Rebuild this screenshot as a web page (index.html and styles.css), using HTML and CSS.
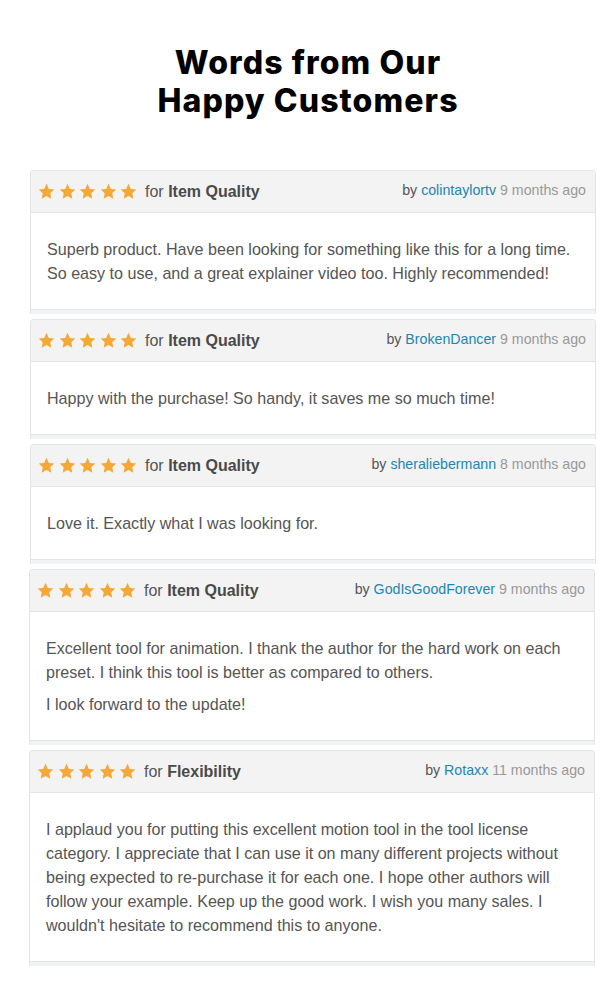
FILE: index.html
```html
<!DOCTYPE html>
<html lang="en">
<head>
<meta charset="utf-8">
<title>Words from Our Happy Customers</title>
<link rel="stylesheet" href="styles.css">
</head>
<body>
<svg width="0" height="0" class="defs" aria-hidden="true">
  <defs>
    <symbol id="star" viewBox="0 0 24 24">
      <path d="M12 1.2l3.3 7.1 7.7.9-5.7 5.3 1.5 7.7L12 18.3l-6.8 3.9 1.5-7.7L1 9.2l7.7-.9z"/>
    </symbol>
  </defs>
</svg>
<main class="page">
  <h1 class="title">Words from Our<br>Happy Customers</h1>

  <section class="reviews">
    <article class="review">
      <header class="review-head">
        <div class="rating">
          <span class="stars"><svg><use href="#star"/></svg><svg><use href="#star"/></svg><svg><use href="#star"/></svg><svg><use href="#star"/></svg><svg><use href="#star"/></svg></span>
          <span class="for">for <b>Item Quality</b></span>
        </div>
        <div class="meta">by <a href="#">colintaylortv</a> <span class="ago">9 months ago</span></div>
      </header>
      <div class="review-body">
        <p>Superb product. Have been looking for something like this for a long time. So easy to use, and a great explainer video too. Highly recommended!</p>
      </div>
      <div class="review-foot"></div>
    </article>

    <article class="review">
      <header class="review-head">
        <div class="rating">
          <span class="stars"><svg><use href="#star"/></svg><svg><use href="#star"/></svg><svg><use href="#star"/></svg><svg><use href="#star"/></svg><svg><use href="#star"/></svg></span>
          <span class="for">for <b>Item Quality</b></span>
        </div>
        <div class="meta">by <a href="#">BrokenDancer</a> <span class="ago">9 months ago</span></div>
      </header>
      <div class="review-body">
        <p>Happy with the purchase! So handy, it saves me so much time!</p>
      </div>
      <div class="review-foot"></div>
    </article>

    <article class="review">
      <header class="review-head">
        <div class="rating">
          <span class="stars"><svg><use href="#star"/></svg><svg><use href="#star"/></svg><svg><use href="#star"/></svg><svg><use href="#star"/></svg><svg><use href="#star"/></svg></span>
          <span class="for">for <b>Item Quality</b></span>
        </div>
        <div class="meta">by <a href="#">sheraliebermann</a> <span class="ago">8 months ago</span></div>
      </header>
      <div class="review-body">
        <p>Love it. Exactly what I was looking for.</p>
      </div>
      <div class="review-foot"></div>
    </article>

    <article class="review review--shift">
      <header class="review-head">
        <div class="rating">
          <span class="stars"><svg><use href="#star"/></svg><svg><use href="#star"/></svg><svg><use href="#star"/></svg><svg><use href="#star"/></svg><svg><use href="#star"/></svg></span>
          <span class="for">for <b>Item Quality</b></span>
        </div>
        <div class="meta">by <a href="#">GodIsGoodForever</a> <span class="ago">9 months ago</span></div>
      </header>
      <div class="review-body">
        <p>Excellent tool for animation. I thank the author for the hard work on each preset. I think this tool is better as compared to others.</p>
        <p>I look forward to the update!</p>
      </div>
      <div class="review-foot"></div>
    </article>

    <article class="review review--shift">
      <header class="review-head">
        <div class="rating">
          <span class="stars"><svg><use href="#star"/></svg><svg><use href="#star"/></svg><svg><use href="#star"/></svg><svg><use href="#star"/></svg><svg><use href="#star"/></svg></span>
          <span class="for">for <b>Flexibility</b></span>
        </div>
        <div class="meta">by <a href="#">Rotaxx</a> <span class="ago">11 months ago</span></div>
      </header>
      <div class="review-body">
        <p>I applaud you for putting this excellent motion tool in the tool license category. I appreciate that I can use it on many different projects without being expected to re-purchase it for each one. I hope other authors will follow your example. Keep up the good work. I wish you many sales. I wouldn't hesitate to recommend this to anyone.</p>
      </div>
      <div class="review-foot"></div>
    </article>
  </section>
</main>
</body>
</html>
```

FILE: styles.css
```css
* { box-sizing: border-box; }

html, body {
  margin: 0;
  padding: 0;
  background: #ffffff;
}

.defs { position: absolute; width: 0; height: 0; overflow: hidden; }

.page {
  font-family: "Liberation Sans", Arial, sans-serif;
  color: #555555;
  padding-top: 44px;
  padding-bottom: 20px;
}

.title {
  margin: 0 0 50px;
  text-align: center;
  font-family: Inter, "DejaVu Sans", sans-serif;
  font-weight: 800;
  font-size: 32px;
  line-height: 38px;
  color: #000000;
  letter-spacing: 1.1px;
}

.reviews {
  display: flex;
  flex-direction: column;
  gap: 5px;
}

.review {
  width: 566px;
  margin-left: 30px;
  border: 1px solid #e1e5e8;
  border-bottom: none;
  border-radius: 4px 4px 0 0;
  background: #ffffff;
}

.review--shift {
  margin-left: 29px;
}

.review-head {
  display: flex;
  align-items: center;
  justify-content: space-between;
  height: 42px;
  padding: 0 9px 0 7px;
  background: #f3f3f3;
  border-bottom: 1px solid #e1e5e8;
  border-radius: 4px 4px 0 0;
}

.rating {
  display: flex;
  align-items: center;
}

.stars {
  display: flex;
  gap: 3.5px;
  margin-right: 8px;
}

.stars svg {
  width: 17px;
  height: 17px;
  fill: #f4a836;
}

.for {
  font-size: 16px;
  color: #555555;
}

.for b {
  font-weight: 700;
  color: #4a4a4a;
}

.meta {
  font-size: 14.2px;
  color: #555555;
  margin-bottom: 3px;
}

.meta a {
  color: #1d86b3;
  text-decoration: none;
}

.ago {
  color: #999999;
}

.review-body {
  padding: 24px 16px 24px;
  font-size: 16.1px;
  line-height: 24px;
  color: #555555;
}

.review-body p {
  margin: 0;
}

.review-body p + p {
  margin-top: 8px;
}

.review-foot {
  height: 5px;
  background: #f1f3f4;
  border-top: 1px solid #e1e5e8;
}
```
